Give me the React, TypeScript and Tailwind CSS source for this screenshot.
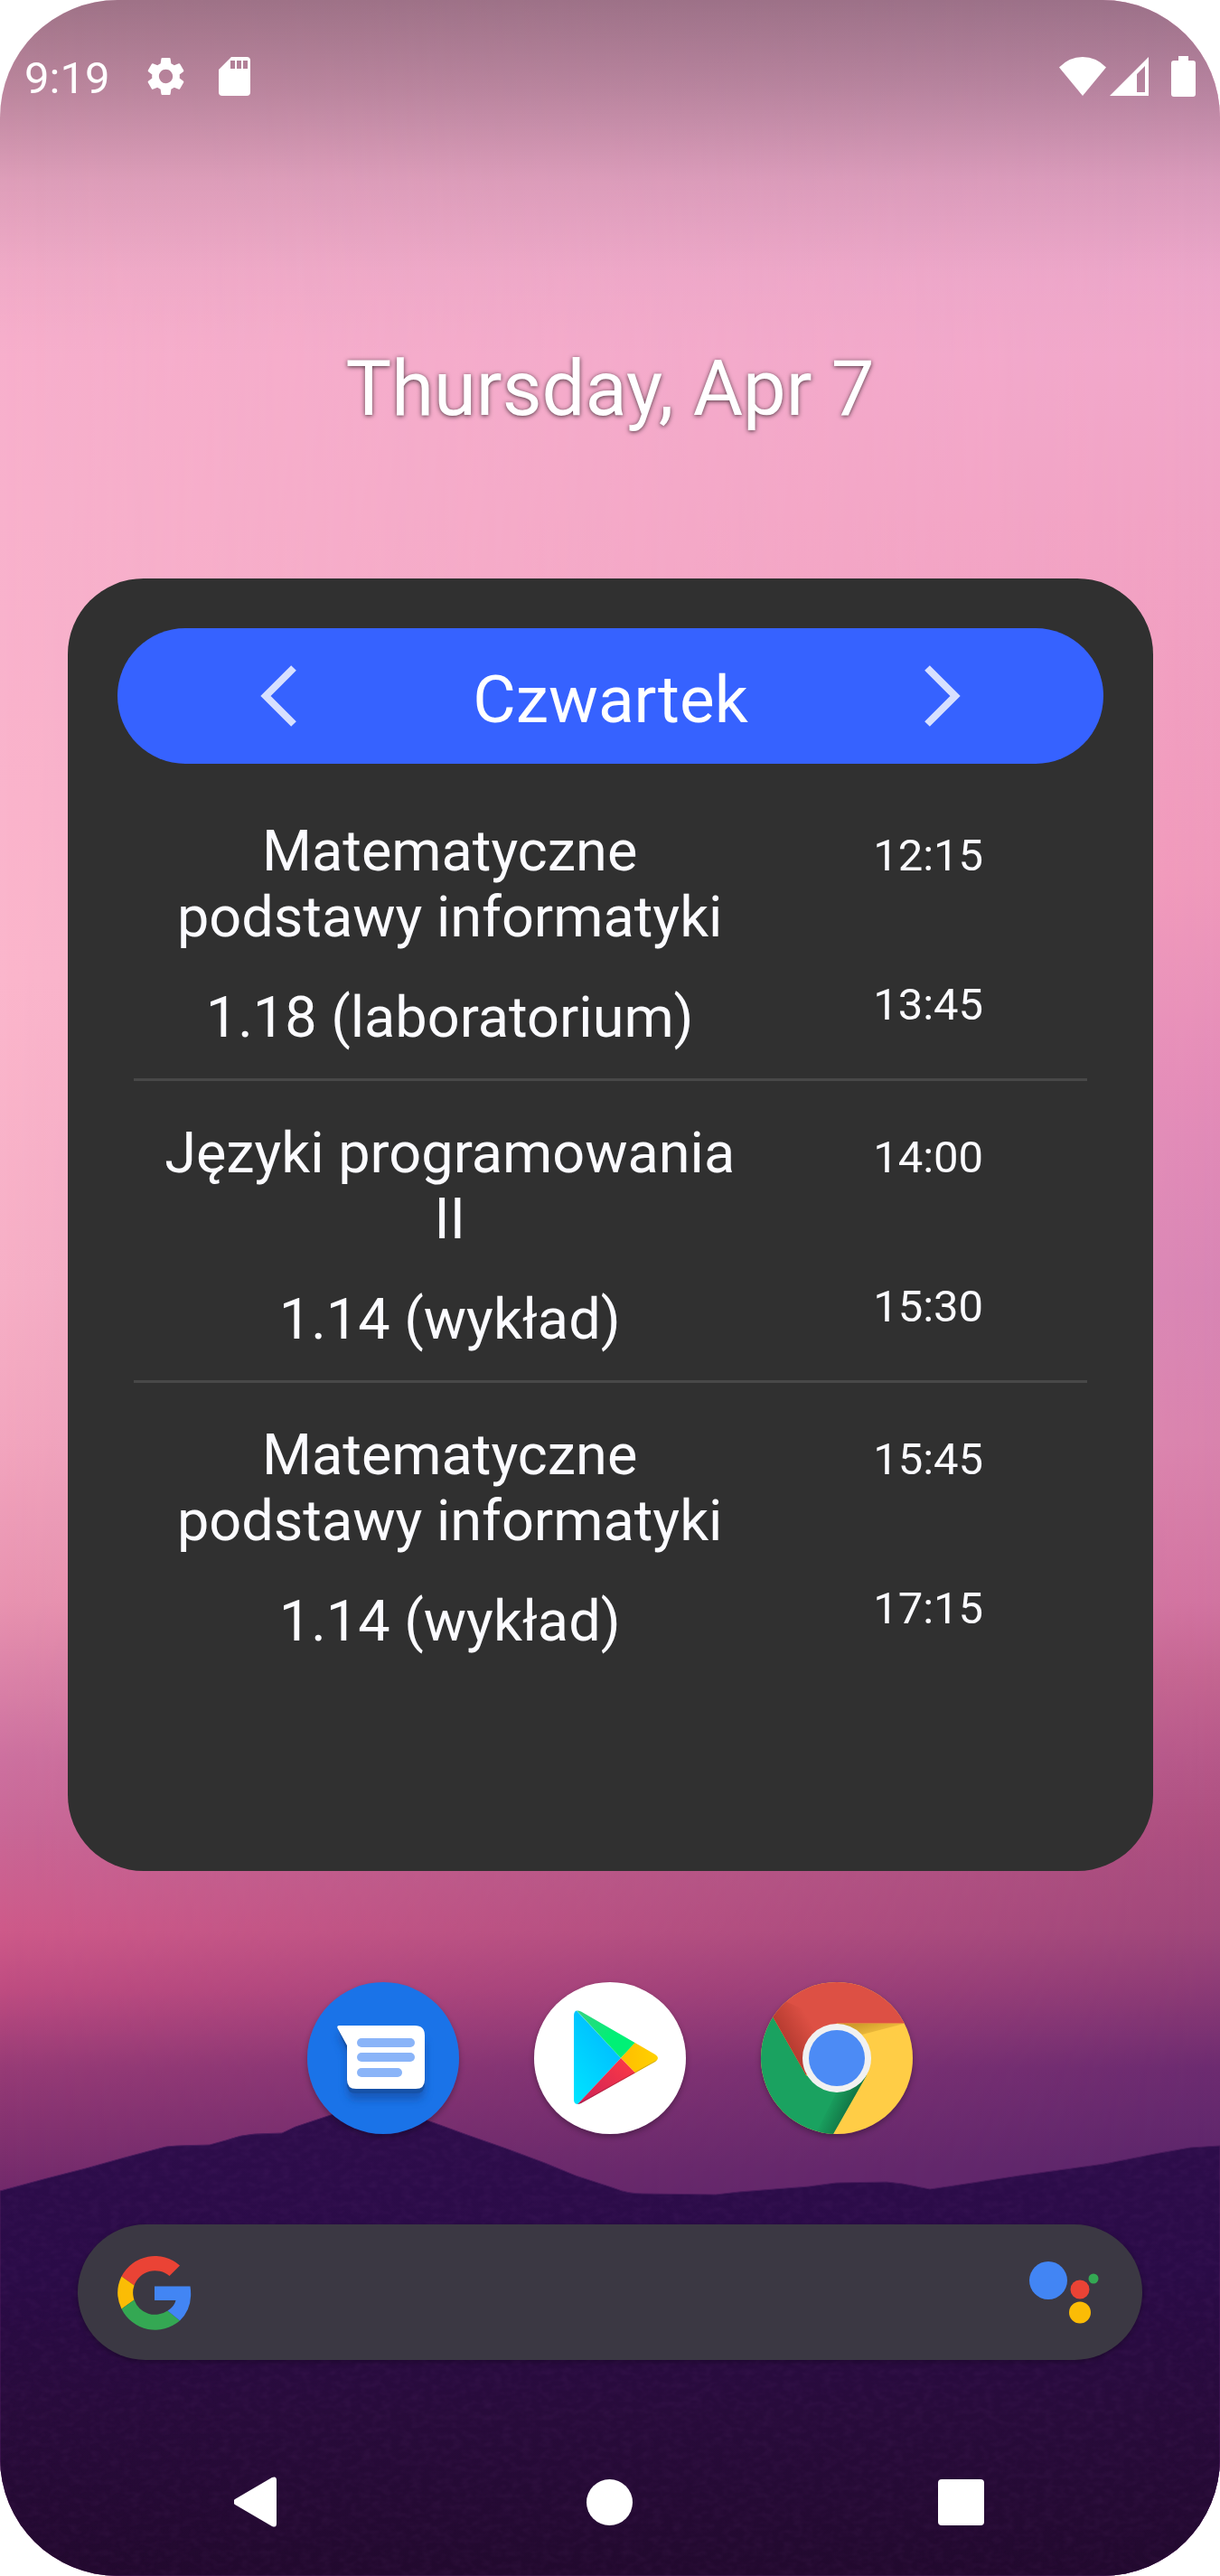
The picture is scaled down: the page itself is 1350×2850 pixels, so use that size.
import React, { useState } from "react";

type Lesson = { title: string; room: string; start: string; end: string };

const days: { name: string; lessons: Lesson[] }[] = [
  {
    name: "Czwartek",
    lessons: [
      { title: "Matematyczne podstawy informatyki", room: "1.18 (laboratorium)", start: "12:15", end: "13:45" },
      { title: "Języki programowania II", room: "1.14 (wykład)", start: "14:00", end: "15:30" },
      { title: "Matematyczne podstawy informatyki", room: "1.14 (wykład)", start: "15:45", end: "17:15" },
    ],
  },
];

function Wallpaper() {
  return (
    <svg
      aria-hidden="true"
      viewBox="0 0 1350 2850"
      preserveAspectRatio="none"
      className="absolute inset-0 h-full w-full"
    >
      <defs>
        <linearGradient id="skyLeft" x1="0" y1="0" x2="0" y2="2850" gradientUnits="userSpaceOnUse">
          <stop offset="0" stopColor="#eaa8c6" />
          <stop offset="0.13" stopColor="#f7afcc" />
          <stop offset="0.38" stopColor="#fbb6cc" />
          <stop offset="0.5" stopColor="#f6afc6" />
          <stop offset="0.56" stopColor="#f2a5be" />
          <stop offset="0.622" stopColor="#e893b0" />
          <stop offset="0.682" stopColor="#cd719f" />
          <stop offset="0.712" stopColor="#c96796" />
          <stop offset="0.749" stopColor="#ce5a8a" />
          <stop offset="0.773" stopColor="#be4c81" />
          <stop offset="0.803" stopColor="#973b76" />
          <stop offset="0.85" stopColor="#722a6b" />
        </linearGradient>
        <linearGradient id="skyRight" x1="0" y1="0" x2="0" y2="2850" gradientUnits="userSpaceOnUse">
          <stop offset="0" stopColor="#e4a5c8" />
          <stop offset="0.11" stopColor="#f1a9cd" />
          <stop offset="0.2" stopColor="#f1a2c4" />
          <stop offset="0.34" stopColor="#f099bb" />
          <stop offset="0.42" stopColor="#e48cb8" />
          <stop offset="0.5" stopColor="#d885b4" />
          <stop offset="0.56" stopColor="#d983ad" />
          <stop offset="0.622" stopColor="#d173a0" />
          <stop offset="0.652" stopColor="#c36490" />
          <stop offset="0.682" stopColor="#b65889" />
          <stop offset="0.712" stopColor="#ac4e7f" />
          <stop offset="0.749" stopColor="#9f477a" />
          <stop offset="0.773" stopColor="#8b3a75" />
          <stop offset="0.803" stopColor="#6c2b70" />
          <stop offset="0.84" stopColor="#5c266b" />
        </linearGradient>
        <linearGradient id="across" x1="0" y1="0" x2="1" y2="0">
          <stop offset="0" stopColor="#000" />
          <stop offset="1" stopColor="#fff" />
        </linearGradient>
        <mask id="toRight">
          <rect width="1350" height="2850" fill="url(#across)" />
        </mask>
        <linearGradient id="ground" x1="0" y1="2330" x2="0" y2="2850" gradientUnits="userSpaceOnUse">
          <stop offset="0" stopColor="#2e0d4b" />
          <stop offset="0.35" stopColor="#2a0b47" />
          <stop offset="0.65" stopColor="#280b3b" />
          <stop offset="1" stopColor="#22092e" />
        </linearGradient>
        <linearGradient id="topShade" x1="0" y1="0" x2="0" y2="1">
          <stop offset="0" stopColor="#000" stopOpacity="0.32" />
          <stop offset="0.25" stopColor="#000" stopOpacity="0.21" />
          <stop offset="0.5" stopColor="#000" stopOpacity="0.08" />
          <stop offset="0.75" stopColor="#000" stopOpacity="0.02" />
          <stop offset="1" stopColor="#000" stopOpacity="0" />
        </linearGradient>
        <filter id="grain" x="0" y="0" width="100%" height="100%">
          <feTurbulence type="fractalNoise" baseFrequency="0.09 0.14" numOctaves="2" seed="4" />
          <feColorMatrix values="0 0 0 0 0.36  0 0 0 0 0.1  0 0 0 0 0.45  0.9 0 0 0 -0.34" />
          <feComposite in2="SourceGraphic" operator="in" />
        </filter>
        <path
          id="ridge"
          d="M0 2424L52 2410L95 2399L138 2387L172 2378Q184 2374 196 2374L232 2373L250 2368Q266 2362 282 2361L312 2360L327 2353L366 2340Q392 2329 422 2330Q450 2334 473 2346L517 2362L560 2377L603 2393L637 2407L680 2421Q694 2427 712 2427L792 2428L818 2425L895 2419L925 2415L981 2414L999 2416L1029 2422L1076 2415L1128 2407L1222 2394L1283 2382L1317 2376L1350 2374V2850H0Z"
        />
      </defs>
      <rect width="1350" height="2850" fill="url(#skyLeft)" />
      <rect width="1350" height="2850" fill="url(#skyRight)" mask="url(#toRight)" />
      <rect width="1350" height="400" fill="url(#topShade)" />
      <use href="#ridge" fill="url(#ground)" stroke="#4a1a5c" strokeWidth="1" />
      <use href="#ridge" filter="url(#grain)" opacity="0.14" />
    </svg>
  );
}

function StatusBar() {
  return (
    <header className="flex h-14 items-center justify-between pr-[27px] pl-[27px]">
      <div className="flex items-center">
        <time className="pt-1 text-[49px] leading-none">9:19</time>
        <svg aria-label="Settings" viewBox="0 0 24 24" className="ml-[37px] size-[51px] fill-white">
          <path d="M19.14 12.94c.04-.3.06-.61.06-.94 0-.32-.02-.64-.07-.94l2.03-1.58a.49.49 0 0 0 .12-.61l-1.92-3.32a.488.488 0 0 0-.59-.22l-2.39.96c-.5-.38-1.03-.7-1.62-.94l-.36-2.54a.484.484 0 0 0-.48-.41h-3.84c-.24 0-.43.17-.47.41l-.36 2.54c-.59.24-1.13.57-1.62.94l-2.39-.96c-.22-.08-.47 0-.59.22L2.74 8.87c-.12.21-.08.47.12.61l2.03 1.58c-.05.3-.09.63-.09.94s.02.64.07.94l-2.03 1.58a.49.49 0 0 0-.12.61l1.92 3.32c.12.22.37.29.59.22l2.39-.96c.5.38 1.03.7 1.62.94l.36 2.54c.05.24.24.41.48.41h3.84c.24 0 .44-.17.47-.41l.36-2.54c.59-.24 1.13-.56 1.62-.94l2.39.96c.22.08.47 0 .59-.22l1.92-3.32c.12-.22.07-.47-.12-.61l-2.01-1.58zM12 15.6A3.61 3.61 0 0 1 8.4 12c0-1.98 1.62-3.6 3.6-3.6s3.6 1.62 3.6 3.6-1.62 3.6-3.6 3.6z" />
        </svg>
        <svg aria-label="SD card" viewBox="0 0 35 43" className="ml-[33px] h-[43px] w-[35px]">
          <path
            fillRule="evenodd"
            fill="#fff"
            d="M14 0H31Q35 0 35 4V39Q35 43 31 43H4Q0 43 0 39V14ZM13 4V13H18V4ZM20 4V13H25V4ZM27 4V13H32V4Z"
          />
        </svg>
      </div>
      <div className="flex items-center">
        <svg aria-label="Wi-Fi" viewBox="0 0 52 43" className="h-[43px] w-[52px] fill-white">
          <path d="M26 43L0 11.500Q11 0 26 0Q41 0 52 11.500Z" />
        </svg>
        <svg aria-label="Mobile signal" viewBox="0 0 43 43" className="ml-1 size-[43px]">
          <path fill="#fff" fillRule="evenodd" d="M43 0V43H0ZM39 10L30 19V39H39Z" />
        </svg>
        <svg aria-label="Battery" viewBox="0 0 27 45" className="ml-[25px] h-[45px] w-[27px] fill-white">
          <path d="M8 0H19V5H24Q27 5 27 8V42Q27 45 24 45H3Q0 45 0 42V8Q0 5 3 5H8Z" />
        </svg>
      </div>
    </header>
  );
}

function DayButton({ label, d, onClick }: { label: string; d: string; onClick: () => void }) {
  return (
    <button type="button" aria-label={label} onClick={onClick} className="flex h-20 w-16 items-center justify-center">
      <svg viewBox="0 0 40 68" className="h-[68px] w-10">
        <path d={d} fill="none" stroke="#d7e0ff" strokeWidth="8" />
      </svg>
    </button>
  );
}

function TimetableWidget() {
  const [index, setIndex] = useState(0);
  const day = days[index];
  const step = (n: number) => setIndex((index + n + days.length) % days.length);
  return (
    <section className="mr-[74px] ml-[75px] mt-[162px] rounded-[84px] bg-[#303030] px-[55px] pt-[55px] pb-[209px] text-[#fbfbff]">
      <div className="flex h-[150px] items-center justify-between rounded-full bg-[#3662ff] px-[146px]">
        <DayButton label="Poprzedni dzień" d="M37 3L6 34L37 65" onClick={() => step(-1)} />
        <h1 className="pt-2 text-[73px] leading-none text-white">{day.name}</h1>
        <DayButton label="Następny dzień" d="M3 3L34 34L3 65" onClick={() => step(1)} />
      </div>
      <ul className="mx-[18px] mt-[17px] divide-y-3 divide-[#484848]">
        {day.lessons.map((l) => (
          <li key={l.start} className="grid grid-cols-3 pt-[43px] pb-[31px]">
            <div className="col-span-2 pr-9 pl-8 text-center text-[63px] leading-[73px]">
              <h2>{l.title}</h2>
              <p className="mt-[38px]">{l.room}</p>
            </div>
            <div className="flex flex-col items-center gap-[107px] pt-[13px] text-[49px] leading-[58px]">
              <time>{l.start}</time>
              <time>{l.end}</time>
            </div>
          </li>
        ))}
      </ul>
    </section>
  );
}

function MessagesIcon() {
  return (
    <svg viewBox="0 0 168 168" className="size-full">
      <defs>
        <filter id="msgShadow" x="-30%" y="-30%" width="160%" height="170%">
          <feGaussianBlur stdDeviation="5" />
        </filter>
      </defs>
      <circle cx="84" cy="84" r="84" fill="#1a73e8" />
      <path d="M33 56L44 80V118Q44 130 54 130H120Q130 130 130 118V66Z" fill="#174ea6" opacity="0.7" filter="url(#msgShadow)" />
      <path d="M33 50L44 76V113Q44 123 54 123H120Q130 123 130 113V60Z" fill="#1652a8" />
      <path d="M35 48H119Q130 48 130 59V108Q130 118 120 118H54Q44 118 44 108V70L33.500 51Q32.500 48 35 48Z" fill="#fff" />
      <g fill="#8ab4f8">
        <rect x="55" y="62" width="64" height="10" rx="5" />
        <rect x="55" y="78" width="64" height="10" rx="5" />
        <rect x="55" y="95" width="50" height="10" rx="5" />
      </g>
    </svg>
  );
}

function PlayIcon() {
  return (
    <svg viewBox="0 0 168 168" className="size-full">
      <defs>
        <linearGradient id="playBlue" x1="0.8" y1="0" x2="0.2" y2="1">
          <stop offset="0" stopColor="#00b4ff" />
          <stop offset="1" stopColor="#00e5ff" />
        </linearGradient>
        <linearGradient id="playRed" x1="1" y1="0" x2="0" y2="1">
          <stop offset="0" stopColor="#ff3a44" />
          <stop offset="1" stopColor="#c8205a" />
        </linearGradient>
        <linearGradient id="playGreen" x1="0" y1="0" x2="0.6" y2="0.6">
          <stop offset="0" stopColor="#3bcf83" />
          <stop offset="1" stopColor="#00f076" />
        </linearGradient>
        <linearGradient id="playYellow" x1="1" y1="0" x2="0" y2="0">
          <stop offset="0" stopColor="#ffd800" />
          <stop offset="1" stopColor="#ffbd00" />
        </linearGradient>
        <clipPath id="playShape">
          <path d="M52 32.500L134 80Q140 84 134 88L52 134Q44 137 44 130V37Q44 29 52 32.500Z" />
        </clipPath>
      </defs>
      <circle cx="84" cy="84" r="84" fill="#fff" />
      <g clipPath="url(#playShape)">
        <path d="M40 24V144L96 84Z" fill="url(#playBlue)" />
        <path d="M44 28L96 84L112.500 66.500V60Z" fill="url(#playGreen)" />
        <path d="M96 84L112.500 66L150 80V90L112.500 101Z" fill="url(#playYellow)" />
        <path d="M44 139.500L96 84L112.500 101V110Z" fill="url(#playRed)" />
        <path d="M48 136L136 87" stroke="#000" strokeOpacity="0.18" strokeWidth="2" />
      </g>
    </svg>
  );
}

function ChromeIcon() {
  return (
    <svg viewBox="0 0 168 168" className="size-full">
      <defs>
        <clipPath id="chromeDisc">
          <circle cx="84" cy="84" r="84" />
        </clipPath>
        <linearGradient id="chromeRedShade" x1="20" y1="54" x2="50" y2="36" gradientUnits="userSpaceOnUse">
          <stop offset="0" stopColor="#7a1c12" stopOpacity="0.4" />
          <stop offset="1" stopColor="#7a1c12" stopOpacity="0" />
        </linearGradient>
        <linearGradient id="chromeGreenShade" x1="98" y1="140" x2="76" y2="130" gradientUnits="userSpaceOnUse">
          <stop offset="0" stopColor="#0a4a2c" stopOpacity="0.5" />
          <stop offset="1" stopColor="#0a4a2c" stopOpacity="0" />
        </linearGradient>
        <linearGradient id="chromeYellowShade" x1="110" y1="46" x2="116" y2="66" gradientUnits="userSpaceOnUse">
          <stop offset="0" stopColor="#a06b10" stopOpacity="0.5" />
          <stop offset="1" stopColor="#a06b10" stopOpacity="0.05" />
        </linearGradient>
      </defs>
      <g clipPath="url(#chromeDisc)">
        <rect width="168" height="168" fill="#ffcd46" />
        <path d="M84 45.500H160L112 58Z" fill="url(#chromeYellowShade)" />
        <path d="M-10 0L13 38L50 103L84 122L117 103L80 168H0Z" fill="#1aa260" />
        <path d="M84 121L117 103L80 168H60Z" fill="url(#chromeGreenShade)" />
        <path d="M13 38L-8 0H168V45.500H84L50 103Z" fill="#dd5044" />
        <path d="M13 38L24 20L84 45.500L50 103Z" fill="url(#chromeRedShade)" />
      </g>
      <circle cx="84" cy="84" r="38" fill="#f1f1f1" />
      <circle cx="84" cy="84" r="31" fill="#4c8bf5" />
    </svg>
  );
}

const apps = [
  { name: "Messages", icon: <MessagesIcon /> },
  { name: "Play Store", icon: <PlayIcon /> },
  { name: "Chrome", icon: <ChromeIcon /> },
];

function SearchBar() {
  return (
    <form
      role="search"
      onSubmit={(e: React.FormEvent) => e.preventDefault()}
      className="mx-[86px] mt-[100px] flex h-[150px] items-center rounded-full bg-[#3b3843] pr-[48px] pl-[44px] shadow-[0_2px_6px_rgba(0,0,0,0.3)]"
    >
      <svg aria-label="Google" viewBox="0 0 82 83" className="h-[83px] w-[82px] shrink-0">
        <path fill="#ea4335" d="M4.500 23.500A41.500 41.500 0 0 1 69 11.500L57.500 23A24.500 24.500 0 0 0 18.500 33.500Z" />
        <path fill="#fbbc05" d="M4.500 23.500A41.500 41.500 0 0 0 4.500 59.500L18.500 49.500A24.500 24.500 0 0 1 18.500 33.500Z" />
        <path fill="#34a853" d="M4.500 59.500A41.500 41.500 0 0 0 69 72.500L55.500 61.500A24.500 24.500 0 0 1 18.500 49.500Z" />
        <path fill="#4285f4" d="M41 34.500H80.500Q84 58 69 72.500L55.500 61.500Q63 57 64.500 50H41Z" />
      </svg>
      <input type="search" aria-label="Search" className="h-full min-w-0 flex-1 bg-transparent px-6 text-[49px] outline-none" />
      <button type="button" aria-label="Voice assistant" className="shrink-0">
        <svg viewBox="0 0 77 77" className="size-[77px]">
          <circle cx="21" cy="25" r="21" fill="#4285f4" />
          <circle cx="56" cy="35" r="10.500" fill="#ea4335" />
          <circle cx="56" cy="60.500" r="12" fill="#fbbc05" />
          <circle cx="71" cy="23" r="5.500" fill="#34a853" />
        </svg>
      </button>
    </form>
  );
}

function NavBar() {
  return (
    <nav className="mt-[129px] grid grid-cols-3 px-[92px]">
      <button type="button" aria-label="Back" className="flex h-14 items-center justify-center">
        <svg viewBox="0 0 54 56" className="h-14 w-[54px] fill-white">
          <path d="M1 25L42 1Q47 -1 47 4V52Q47 57 42 55L1 31Q-3 28 1 25Z" />
        </svg>
      </button>
      <button type="button" aria-label="Home" className="flex h-14 items-center justify-center">
        <span className="size-[51px] rounded-full bg-white" />
      </button>
      <button type="button" aria-label="Recent apps" className="flex h-14 items-center justify-center">
        <span className="size-[51px] rounded-sm bg-white" />
      </button>
    </nav>
  );
}

export default function App() {
  return (
    <div className="min-h-screen bg-white">
      <div className="relative isolate overflow-hidden rounded-[130px] font-['Roboto',sans-serif] text-white">
        <Wallpaper />
        <main className="relative flex flex-col pt-14 pb-[54px]">
          <StatusBar />
          <p className="mt-[270px] text-center text-[85px] leading-[96px] [text-shadow:0_1px_5px_rgba(0,0,0,0.7)]">
            Thursday, Apr 7
          </p>
          <TimetableWidget />
          <div className="mt-[123px] flex justify-center gap-[83px]">
            {apps.map((a) => (
              <button
                key={a.name}
                type="button"
                aria-label={a.name}
                className="size-[168px] rounded-full shadow-[0_3px_6px_rgba(0,0,0,0.3)]"
              >
                {a.icon}
              </button>
            ))}
          </div>
          <SearchBar />
          <NavBar />
        </main>
      </div>
    </div>
  );
}
